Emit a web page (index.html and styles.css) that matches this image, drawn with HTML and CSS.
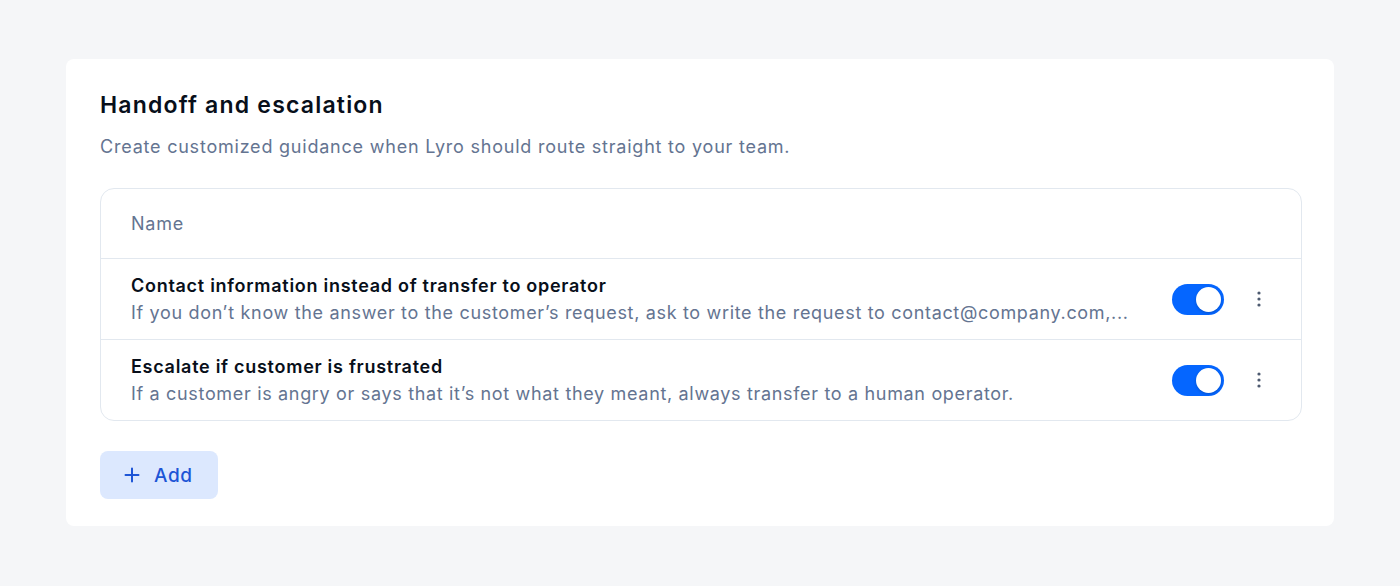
FILE: index.html
```html
<!DOCTYPE html>
<html lang="en">
<head>
<meta charset="utf-8">
<link rel="stylesheet" href="styles.css">
</head>
<body>
<div class="page">
  <section class="card">
    <h2 class="title">Handoff and escalation</h2>
    <p class="subtitle">Create customized guidance when Lyro should route straight to your team.</p>
    <div class="table">
      <div class="thead">Name</div>
      <div class="row">
        <div class="cell-main">
          <div class="row-title">Contact information instead of transfer to operator</div>
          <div class="row-desc">If you don’t know the answer to the customer’s request, ask to write the request to contact@company.com,...</div>
        </div>
        <div class="actions">
          <span class="toggle on"><span class="knob"></span></span>
          <button class="kebab" aria-label="More">
            <svg width="4" height="16" viewBox="0 0 4 16"><circle cx="2" cy="2" r="1.6"/><circle cx="2" cy="8" r="1.6"/><circle cx="2" cy="14" r="1.6"/></svg>
          </button>
        </div>
      </div>
      <div class="row">
        <div class="cell-main">
          <div class="row-title">Escalate if customer is frustrated</div>
          <div class="row-desc">If a customer is angry or says that it’s not what they meant, always transfer to a human operator.</div>
        </div>
        <div class="actions">
          <span class="toggle on"><span class="knob"></span></span>
          <button class="kebab" aria-label="More">
            <svg width="4" height="16" viewBox="0 0 4 16"><circle cx="2" cy="2" r="1.6"/><circle cx="2" cy="8" r="1.6"/><circle cx="2" cy="14" r="1.6"/></svg>
          </button>
        </div>
      </div>
    </div>
    <button class="add-btn">
      <svg width="16" height="16" viewBox="0 0 16 16"><path d="M8 1.5v13M1.5 8h13" stroke="currentColor" stroke-width="2" stroke-linecap="round"/></svg>
      <span>Add</span>
    </button>
  </section>
</div>
</body>
</html>
```
FILE: styles.css
```css
* { box-sizing: border-box; }
html, body { margin: 0; padding: 0; }
body {
  background: #f5f6f8;
  font-family: "Inter", "Lato", sans-serif;
  color: #080f1a;
  width: 1400px;
  height: 586px;
  overflow: hidden;
}
.page { padding: 59px 66px 0 66px; }
.card {
  background: #ffffff;
  border-radius: 8px;
  padding: 32px 32px 28px 34px;
  height: 467px;
}
.title {
  margin: 0;
  font-size: 23px;
  font-weight: 600;
  line-height: 28px;
  letter-spacing: 1.2px;
  color: #080f1a;
}
.subtitle {
  margin: 16px 0 0 0;
  font-size: 18px;
  line-height: 24px;
  letter-spacing: 0.78px;
  color: #647491;
}
.table {
  margin-top: 29px;
  border: 1px solid #e2e8ef;
  border-radius: 14px;
  width: 1202px;
}
.thead {
  height: 70px;
  display: flex;
  align-items: center;
  padding-left: 30px;
  font-size: 18px;
  letter-spacing: 0.78px;
  color: #647491;
  border-bottom: 1px solid #e2e8ef;
}
.row {
  height: 80px;
  display: flex;
  align-items: center;
  padding: 0 30px 0 30px;
}
.row + .row { border-top: 1px solid #e2e8ef; height: 81px; }
.cell-main { flex: 1; min-width: 0; padding-right: 40px; }
.row-title {
  font-size: 18px;
  font-weight: 600;
  line-height: 26px;
  letter-spacing: 0.72px;
  color: #080f1a;
}
.row-desc {
  font-size: 18px;
  line-height: 26px;
  letter-spacing: 0.67px;
  color: #647491;
  white-space: nowrap;
  padding-top: 1px;
}
.actions { display: flex; align-items: center; gap: 23px; }
.toggle {
  width: 52px;
  height: 31px;
  border-radius: 16px;
  background: #d3dbe5;
  display: flex;
  align-items: center;
  padding: 3px;
}
.toggle.on { background: #0566ff; justify-content: flex-end; }
.knob {
  width: 25px;
  height: 25px;
  border-radius: 50%;
  background: #fff;
  box-shadow: 0 1px 3px rgba(0,0,0,0.2);
}
.kebab {
  border: 0;
  background: none;
  padding: 0 10px;
  display: flex;
  align-items: center;
  fill: #4d5a70;
}
.add-btn {
  margin-top: 30px;
  display: flex;
  align-items: center;
  gap: 14px;
  height: 48px;
  padding: 0 20px 0 24px;
  border: 0;
  border-radius: 8px;
  background: #dce8fe;
  color: #1d55d6;
  font-family: inherit;
  font-size: 19px;
  font-weight: 500;
  letter-spacing: 0.6px;
  width: 118px;
}
```
